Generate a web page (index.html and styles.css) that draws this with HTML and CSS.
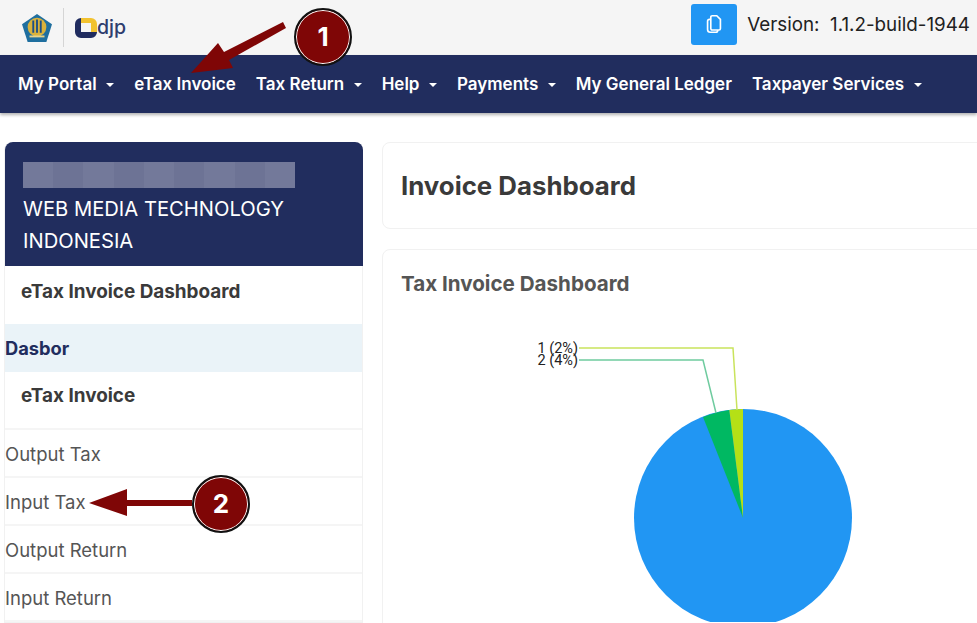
FILE: index.html
```html
<!DOCTYPE html>
<html lang="en">
<head>
  <meta charset="UTF-8">
  <title>Invoice Dashboard</title>
  <link rel="stylesheet" href="styles.css">
</head>
<body>

  <div class="topbar">
    <div class="brand">
      <svg class="brand-crest" viewBox="0 0 34 32" xmlns="http://www.w3.org/2000/svg">
        <path d="M17 1L33 12L27 31H7L1 12z" fill="#1f6f9f"/>
        <circle cx="17" cy="15" r="10" fill="#d9b23c"/>
        <path d="M13 8v13M17 7v14M21 8v13" stroke="#1d4f86" stroke-width="2" fill="none"/>
        <path d="M9 25h16" stroke="#e8d48a" stroke-width="2"/>
      </svg>
      <span class="brand-divider"></span>
      <svg class="brand-mark" viewBox="0 0 22 20" xmlns="http://www.w3.org/2000/svg">
        <path d="M6 0H16a6 6 0 0 1 6 6V15H16V5H6z" fill="#f2c230"/>
        <path d="M6 0V14H22a6 6 0 0 1-6 6H6a6 6 0 0 1-6-6V6a6 6 0 0 1 6-6z" fill="#202c5f"/>
      </svg>
      <span class="brand-name">djp</span>
    </div>
    <div class="version">
      <button class="copy-btn" type="button">
        <svg viewBox="0 0 24 24" xmlns="http://www.w3.org/2000/svg"><path d="M10 3h5l4 4v10a1.500 1.500 0 0 1-1.500 1.500H10A1.500 1.500 0 0 1 8.500 17V4.500A1.500 1.500 0 0 1 10 3z"/><path d="M8.500 7H7a2 2 0 0 0-2 2v9a3 3 0 0 0 3 3h6a2 2 0 0 0 2-2v-.5"/></svg>
      </button>
      <span class="version-text">Version:&nbsp; 1.1.2-build-1944</span>
    </div>
  </div>

  <nav class="navbar">
    <a class="nav-link caret">My Portal</a>
    <a class="nav-link">eTax Invoice</a>
    <a class="nav-link caret">Tax Return</a>
    <a class="nav-link caret">Help</a>
    <a class="nav-link caret">Payments</a>
    <a class="nav-link">My General Ledger</a>
    <a class="nav-link caret">Taxpayer Services</a>
  </nav>

  <div class="content">
    <aside class="sidebar">
      <div class="side-head">
        <div class="blurred-name">
          <span></span><span></span><span></span><span></span><span></span><span></span><span></span><span></span><span></span>
        </div>
        <div class="company">WEB MEDIA TECHNOLOGY INDONESIA</div>
      </div>
      <div class="side-title side-title-first">eTax Invoice Dashboard</div>
      <div class="side-section">Dasbor</div>
      <div class="side-title side-title-second">eTax Invoice</div>
      <a class="side-link">Output Tax</a>
      <a class="side-link">Input Tax</a>
      <a class="side-link">Output Return</a>
      <a class="side-link">Input Return</a>
    </aside>

    <main class="main">
      <div class="card page-card">
        <h1>Invoice Dashboard</h1>
      </div>
      <div class="card chart-card">
        <h2>Tax Invoice Dashboard</h2>
        <svg class="pie" viewBox="0 0 590 330" xmlns="http://www.w3.org/2000/svg">
          <circle cx="361" cy="226" r="109" fill="#2196f3"/>
          <path d="M361 226L321 125A109 109 0 0 1 347.300 117.900z" fill="#00b862"/>
          <path d="M361 226L347.300 117.900A109 109 0 0 1 361 117z" fill="#b5e016"/>
          <polyline points="197,56 351,56 355,118" fill="none" stroke="#c9e35c" stroke-width="1.500"/>
          <polyline points="197,68 321,68 334,121" fill="none" stroke="#6fcb9f" stroke-width="1.500"/>
          <text class="pie-label" x="196" y="61" text-anchor="end">1 (2%)</text>
          <text class="pie-label" x="196" y="73" text-anchor="end">2 (4%)</text>
        </svg>
      </div>
    </main>
  </div>

  <!-- step callouts on top of the page -->
  <svg class="arrows" viewBox="0 0 977 623" xmlns="http://www.w3.org/2000/svg">
    <path d="M286 28L229 60L233 68L191 73L218 43L224 52L283 22z" fill="#7f0606"/>
    <path d="M192 500H127V489L89 503L127 516V506H192z" fill="#7f0606"/>
  </svg>
  <div class="step step-one">1</div>
  <div class="step step-two">2</div>

</body>
</html>
```

FILE: styles.css
```css
body {
  margin: 0;
  height: 623px;
  overflow: hidden;
  position: relative;
  background: #fff;
  font-family: Inter, "Noto Sans", sans-serif;
  color: #3f4254;
}

.topbar {
  display: flex;
  align-items: center;
  justify-content: space-between;
  height: 55px;
  padding: 0 7px 0 21px;
  background: #f5f5f5;
}

.brand {
  display: flex;
  align-items: center;
}

.brand-crest {
  width: 32px;
  height: 30px;
}

.brand-divider {
  width: 1px;
  height: 39px;
  margin: 0 11px 0 10px;
  background: #d5d5d5;
}

.brand-mark {
  width: 22px;
  height: 20px;
}

.brand-name {
  color: #2e3d6e;
  font-size: 19.500px;
  font-weight: 500;
  line-height: 1;
}

.version {
  display: flex;
  align-items: center;
  gap: 10px;
}

.copy-btn {
  display: flex;
  align-items: center;
  justify-content: center;
  width: 46px;
  height: 41px;
  margin-bottom: 7px;
  padding: 0;
  border: none;
  border-radius: 3px;
  background: #2196f3;
}

.copy-btn svg {
  width: 22px;
  height: 22px;
  fill: none;
  stroke: #fff;
  stroke-width: 1.800;
}

.version-text {
  margin-bottom: 6px;
  font-size: 18.800px;
  color: #212121;
}

.navbar {
  display: flex;
  align-items: center;
  gap: 20px;
  height: 58px;
  padding: 0 18px;
  background: #212d5e;
  box-shadow: 0 2px 3px rgba(0,0,0,0.3);
}

.nav-link {
  color: #fff;
  font-size: 17px;
  font-weight: 600;
  white-space: nowrap;
}

.caret::after {
  content: "";
  display: inline-block;
  margin-left: 9.500px;
  vertical-align: 3px;
  border-top: 4px solid #fff;
  border-left: 4.500px solid transparent;
  border-right: 4.500px solid transparent;
}

.content {
  display: flex;
  align-items: flex-start;
  gap: 19px;
  box-sizing: border-box;
  height: 510px;
  padding: 29px 0 0 4px;
  overflow: hidden;
}

.sidebar {
  flex: 0 0 359px;
  border: 1px solid #f1f1f1;
  border-top: none;
  box-sizing: border-box;
  border-radius: 8px 8px 0 0;
}

.side-head {
  height: 124px;
  box-sizing: border-box;
  margin: 0 -1px 0 0;
  padding: 20px 18px 0;
  background: #212d5e;
  border-radius: 8px 8px 0 0;
  color: #fff;
}

.blurred-name {
  display: flex;
  width: 272px;
  height: 26px;
}

.blurred-name span {
  flex: 1;
  background: #73799a;
}

.blurred-name span:nth-child(even) {
  background: #6d7395;
}

.company {
  margin-top: 5px;
  font-size: 20.200px;
  line-height: 32px;
}

.side-title {
  padding: 0 16px;
  color: #3a3a3a;
  font-size: 18.900px;
  font-weight: 700;
}

.side-title-first {
  height: 58px;
  line-height: 52px;
}

.side-title-second {
  height: 56px;
  line-height: 47px;
  border-bottom: 2px solid #f5f5f5;
}

.side-section {
  height: 48px;
  line-height: 49px;
  background: #eaf3f8;
  color: #212d5e;
  font-size: 18.300px;
  font-weight: 700;
}

.side-link {
  display: block;
  height: 46px;
  line-height: 48px;
  border-bottom: 2px solid #f5f5f5;
  color: #555;
  font-size: 18.500px;
}

.main {
  flex: 0 0 620px;
  display: flex;
  flex-direction: column;
  gap: 20px;
}

.card {
  box-sizing: border-box;
  background: #fff;
  border: 1px solid #f1f1f1;
  border-radius: 8px;
}

.page-card {
  height: 87px;
  padding: 0 18px;
}

.page-card h1 {
  margin: 0;
  line-height: 85px;
  color: #3a3a3a;
  font-size: 25.800px;
  font-weight: 700;
}

.chart-card {
  height: 420px;
  padding: 21px 18px;
}

.chart-card h2 {
  margin: 0;
  color: #555;
  font-size: 20.600px;
  font-weight: 700;
  line-height: 26px;
}

.pie {
  display: block;
  width: 590px;
  height: 330px;
  margin: -5px 0 0 -19px;
}

.pie-label {
  font-family: Roboto, sans-serif;
  font-size: 14.500px;
  fill: #222;
}

.arrows {
  position: absolute;
  top: 0;
  left: 0;
  width: 977px;
  height: 623px;
  pointer-events: none;
}

.step {
  position: absolute;
  box-sizing: border-box;
  width: 58px;
  height: 58px;
  border: 2px solid #111;
  border-radius: 50%;
  background: #7f0606;
  box-shadow: inset 0 0 0 1px #fff;
  color: #fff;
  font-size: 26px;
  font-weight: 700;
  line-height: 54px;
  text-align: center;
}

.step-one {
  top: 8px;
  left: 294px;
}

.step-two {
  top: 475px;
  left: 192px;
}
```
